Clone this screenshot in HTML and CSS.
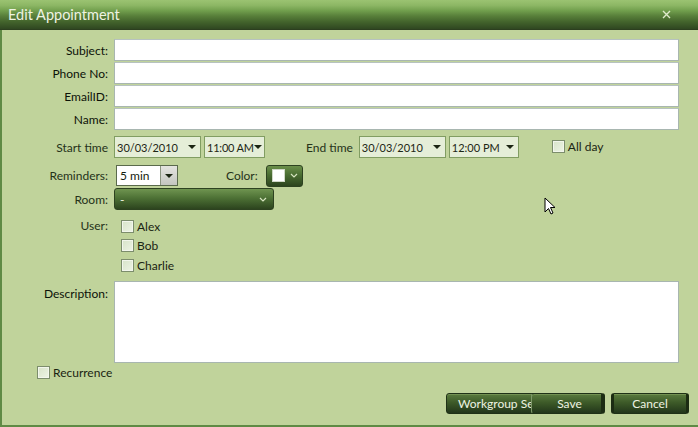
FILE: index.html
```html
<!DOCTYPE html>
<html>
<head>
<meta charset="utf-8">
<link rel="stylesheet" href="styles.css">
</head>
<body>
<div class="window">
  <div class="titlebar">
    <span class="title">Edit Appointment</span>
    <svg class="close" width="9" height="9" viewBox="0 0 9 9"><path d="M1 1L8 8M8 1L1 8" stroke="#dfeacb" stroke-width="1.4"/></svg>
  </div>
  <div class="content">
    <div class="row text-row first"><label class="lbl strong">Subject:</label><div class="input"></div></div>
    <div class="row text-row"><label class="lbl strong">Phone No:</label><div class="input"></div></div>
    <div class="row text-row"><label class="lbl strong">EmailID:</label><div class="input"></div></div>
    <div class="row text-row"><label class="lbl strong">Name:</label><div class="input"></div></div>

    <div class="row time-row">
      <label class="lbl">Start time</label>
      <div class="picker date"><span>30/03/2010</span><i class="tri"></i></div>
      <div class="picker time"><span>11:00 AM</span><i class="tri"></i></div>
      <label class="lbl-inline end-lbl">End time</label>
      <div class="picker date"><span>30/03/2010</span><i class="tri"></i></div>
      <div class="picker time2"><span>12:00 PM</span><i class="tri"></i></div>
      <span class="check allday"><i class="box"></i>All day</span>
    </div>

    <div class="row rem-row">
      <label class="lbl">Reminders:</label>
      <div class="combo"><span>5 min</span><span class="combo-btn"><i class="tri small"></i></span></div>
      <label class="lbl-inline color-lbl">Color:</label>
      <div class="color-btn"><i class="swatch"></i><svg width="8" height="5" viewBox="0 0 8 5"><path d="M1 1L4 4L7 1" fill="none" stroke="#d6e4c0" stroke-width="1.2"/></svg></div>
    </div>

    <div class="row room-row">
      <label class="lbl">Room:</label>
      <div class="room"><span>-</span><svg width="8" height="5" viewBox="0 0 8 5"><path d="M1 1L4 4L7 1" fill="none" stroke="#d6e4c0" stroke-width="1.2"/></svg></div>
    </div>

    <div class="row user-row">
      <label class="lbl user-lbl">User:</label>
      <div class="users">
        <span class="check"><i class="box"></i>Alex</span>
        <span class="check"><i class="box"></i>Bob</span>
        <span class="check"><i class="box"></i>Charlie</span>
      </div>
    </div>

    <div class="row desc-row">
      <label class="lbl strong desc-lbl">Description:</label>
      <div class="textarea"></div>
    </div>

    <div class="recur"><span class="check"><i class="box"></i>Recurrence</span></div>

    <div class="buttons">
      <div class="btn wg"><span>Workgroup Se</span></div>
      <div class="btn save"><span>Save</span></div>
      <div class="btn cancel"><span>Cancel</span></div>
    </div>
  </div>
  <svg class="cursor" width="13" height="20" viewBox="0 0 13 20"><path d="M1 1L1 15L4.5 11.5L7 17L9 16L6.5 10.5L11 10.5Z" fill="#fff" stroke="#000" stroke-width="1" stroke-linejoin="round"/></svg>
</div>
</body>
</html>
```

FILE: styles.css
```css
* { box-sizing: border-box; }
html, body { margin: 0; padding: 0; }
body {
  width: 698px;
  height: 427px;
  overflow: hidden;
  font-family: Lato, "Open Sans", sans-serif;
  font-size: 12px;
  color: #141c0e;
  background: #c0d39b;
}
.window {
  position: relative;
  width: 698px;
  height: 427px;
  display: flex;
  flex-direction: column;
}
.titlebar {
  height: 30px;
  flex: none;
  display: flex;
  align-items: center;
  justify-content: space-between;
  padding: 0 27px 1px 8px;
  background: linear-gradient(#9bc372 0%, #8db765 18%, #72a04e 36%, #587f3a 55%, #43642c 75%, #2f4721 100%);
  border-bottom: 1px solid #2c3f1f;
}
.title {
  color: #eef3e2;
  font-size: 14.5px;
}
.close { margin-top: 1px; }
.content {
  flex: 1;
  display: flex;
  flex-direction: column;
  border-left: 2px solid #5f8a45;
  border-bottom: 2px solid #5f8a45;
  padding-right: 19px;
}
.row {
  display: flex;
  align-items: center;
}
.lbl {
  width: 106px;
  flex: none;
  text-align: right;
  margin-right: 6px;
  color: #253219;
}
.lbl.strong { color: #0c1208; }
.text-row { height: 22px; margin-top: 1px; }
.text-row.first { margin-top: 9px; }
.input {
  flex: 1;
  height: 22px;
  background: #fff;
  border: 1px solid #a8b6b0;
  border-top-color: #b6c2c0;
}
.time-row { height: 22px; margin-top: 6px; }
.picker {
  height: 22px;
  display: flex;
  align-items: center;
  justify-content: space-between;
  background: #e5eed8;
  border: 1px solid #819d62;
  padding: 0 4px 0 2px;
  font-size: 11px;
  white-space: nowrap;
  color: #1d2715;
}
.picker.date { width: 87px; }
.picker.time { width: 61px; margin-left: 3px; padding-right: 3px; letter-spacing: -0.2px; }
.picker.time2 { width: 70px; margin-left: 3px; }
.tri {
  display: inline-block;
  flex: none;
  width: 0; height: 0;
  border-left: 4px solid transparent;
  border-right: 4px solid transparent;
  border-top: 4px solid #1b2513;
}
.lbl-inline { color: #253219; }
.end-lbl { margin-left: 41px; margin-right: 6px; }
.check {
  display: inline-flex;
  align-items: center;
  color: #1a2412;
}
.box {
  display: inline-block;
  width: 13px;
  height: 13px;
  border: 1px solid #7c8d6c;
  background: linear-gradient(135deg, #d7e3c8, #eef4e6);
  box-shadow: inset 0 0 0 1px #f2f6ec;
  margin-right: 3px;
}
.allday { margin-left: 33px; margin-top: -2px; }
.rem-row { height: 23px; margin-top: 6px; }
.combo {
  margin-left: 2px;
  width: 62px;
  height: 21px;
  display: flex;
  align-items: center;
  justify-content: space-between;
  background: #fff;
  border: 1px solid #5a6a4c;
  padding-left: 3px;
}
.combo-btn {
  width: 17px;
  height: 19px;
  display: flex;
  align-items: center;
  justify-content: center;
  background: linear-gradient(#e4e4e0, #c4c6c0);
  border-left: 1px solid #8a9480;
}
.color-lbl { margin-left: 48px; margin-right: 8px; }
.color-btn {
  width: 37px;
  height: 22px;
  display: flex;
  align-items: center;
  gap: 5px;
  padding-left: 5px;
  border-radius: 3px;
  background: linear-gradient(#6a8f4a, #4a6d32 45%, #2c441e);
  border: 1px solid #2d4220;
}
.swatch {
  display: inline-block;
  width: 13px;
  height: 13px;
  background: #fff;
  border: 1px solid #d0d8c8;
}
.room-row { height: 22px; margin-top: 1px; }
.room {
  width: 160px;
  height: 22px;
  display: flex;
  align-items: center;
  justify-content: space-between;
  padding: 0 6px 0 5px;
  border-radius: 3px;
  background: linear-gradient(#6f9450, #4d7135 45%, #2c441e);
  border: 1px solid #2d4220;
  color: #eef3e2;
}
.user-row { align-items: flex-start; margin-top: 8px; }
.users {
  display: flex;
  flex-direction: column;
  gap: 3.5px;
  margin-left: 7px;
}
.users .check { height: 16px; }
.desc-row { align-items: flex-start; margin-top: 8px; }
.desc-lbl { margin-top: 5px; }
.textarea {
  flex: 1;
  height: 82px;
  background: #fff;
  border: 1px solid #a8b6b0;
}
.recur { margin-top: 2px; padding-left: 35px; height: 16px; }
.buttons {
  display: flex;
  justify-content: flex-end;
  margin-top: 12px;
  margin-right: -10px;
}
.btn {
  height: 21px;
  display: flex;
  align-items: center;
  justify-content: center;
  border-radius: 3px;
  color: #eef3e2;
  background: linear-gradient(#5a7b3e, #3d5a28 45%, #22361a);
  border: 1px solid #1f3116;
  box-shadow: inset 0 1px 0 rgba(160,190,120,0.35);
}
.btn.wg {
  width: 103px;
  justify-content: flex-start;
  padding-left: 11px;
  overflow: hidden;
  white-space: nowrap;
}
.btn.save {
  width: 74px;
  margin-left: -18px;
  padding-left: 6px;
  border-left: 1px solid #7d9868;
  border-right: 4px solid #1c2c13;
}
.btn.cancel {
  width: 78px;
  margin-left: 6px;
  border-left: 3px solid #1c2c13;
  border-right: 3px solid #1c2c13;
}
.cursor {
  position: absolute;
  left: 544px;
  top: 197px;
}
```
